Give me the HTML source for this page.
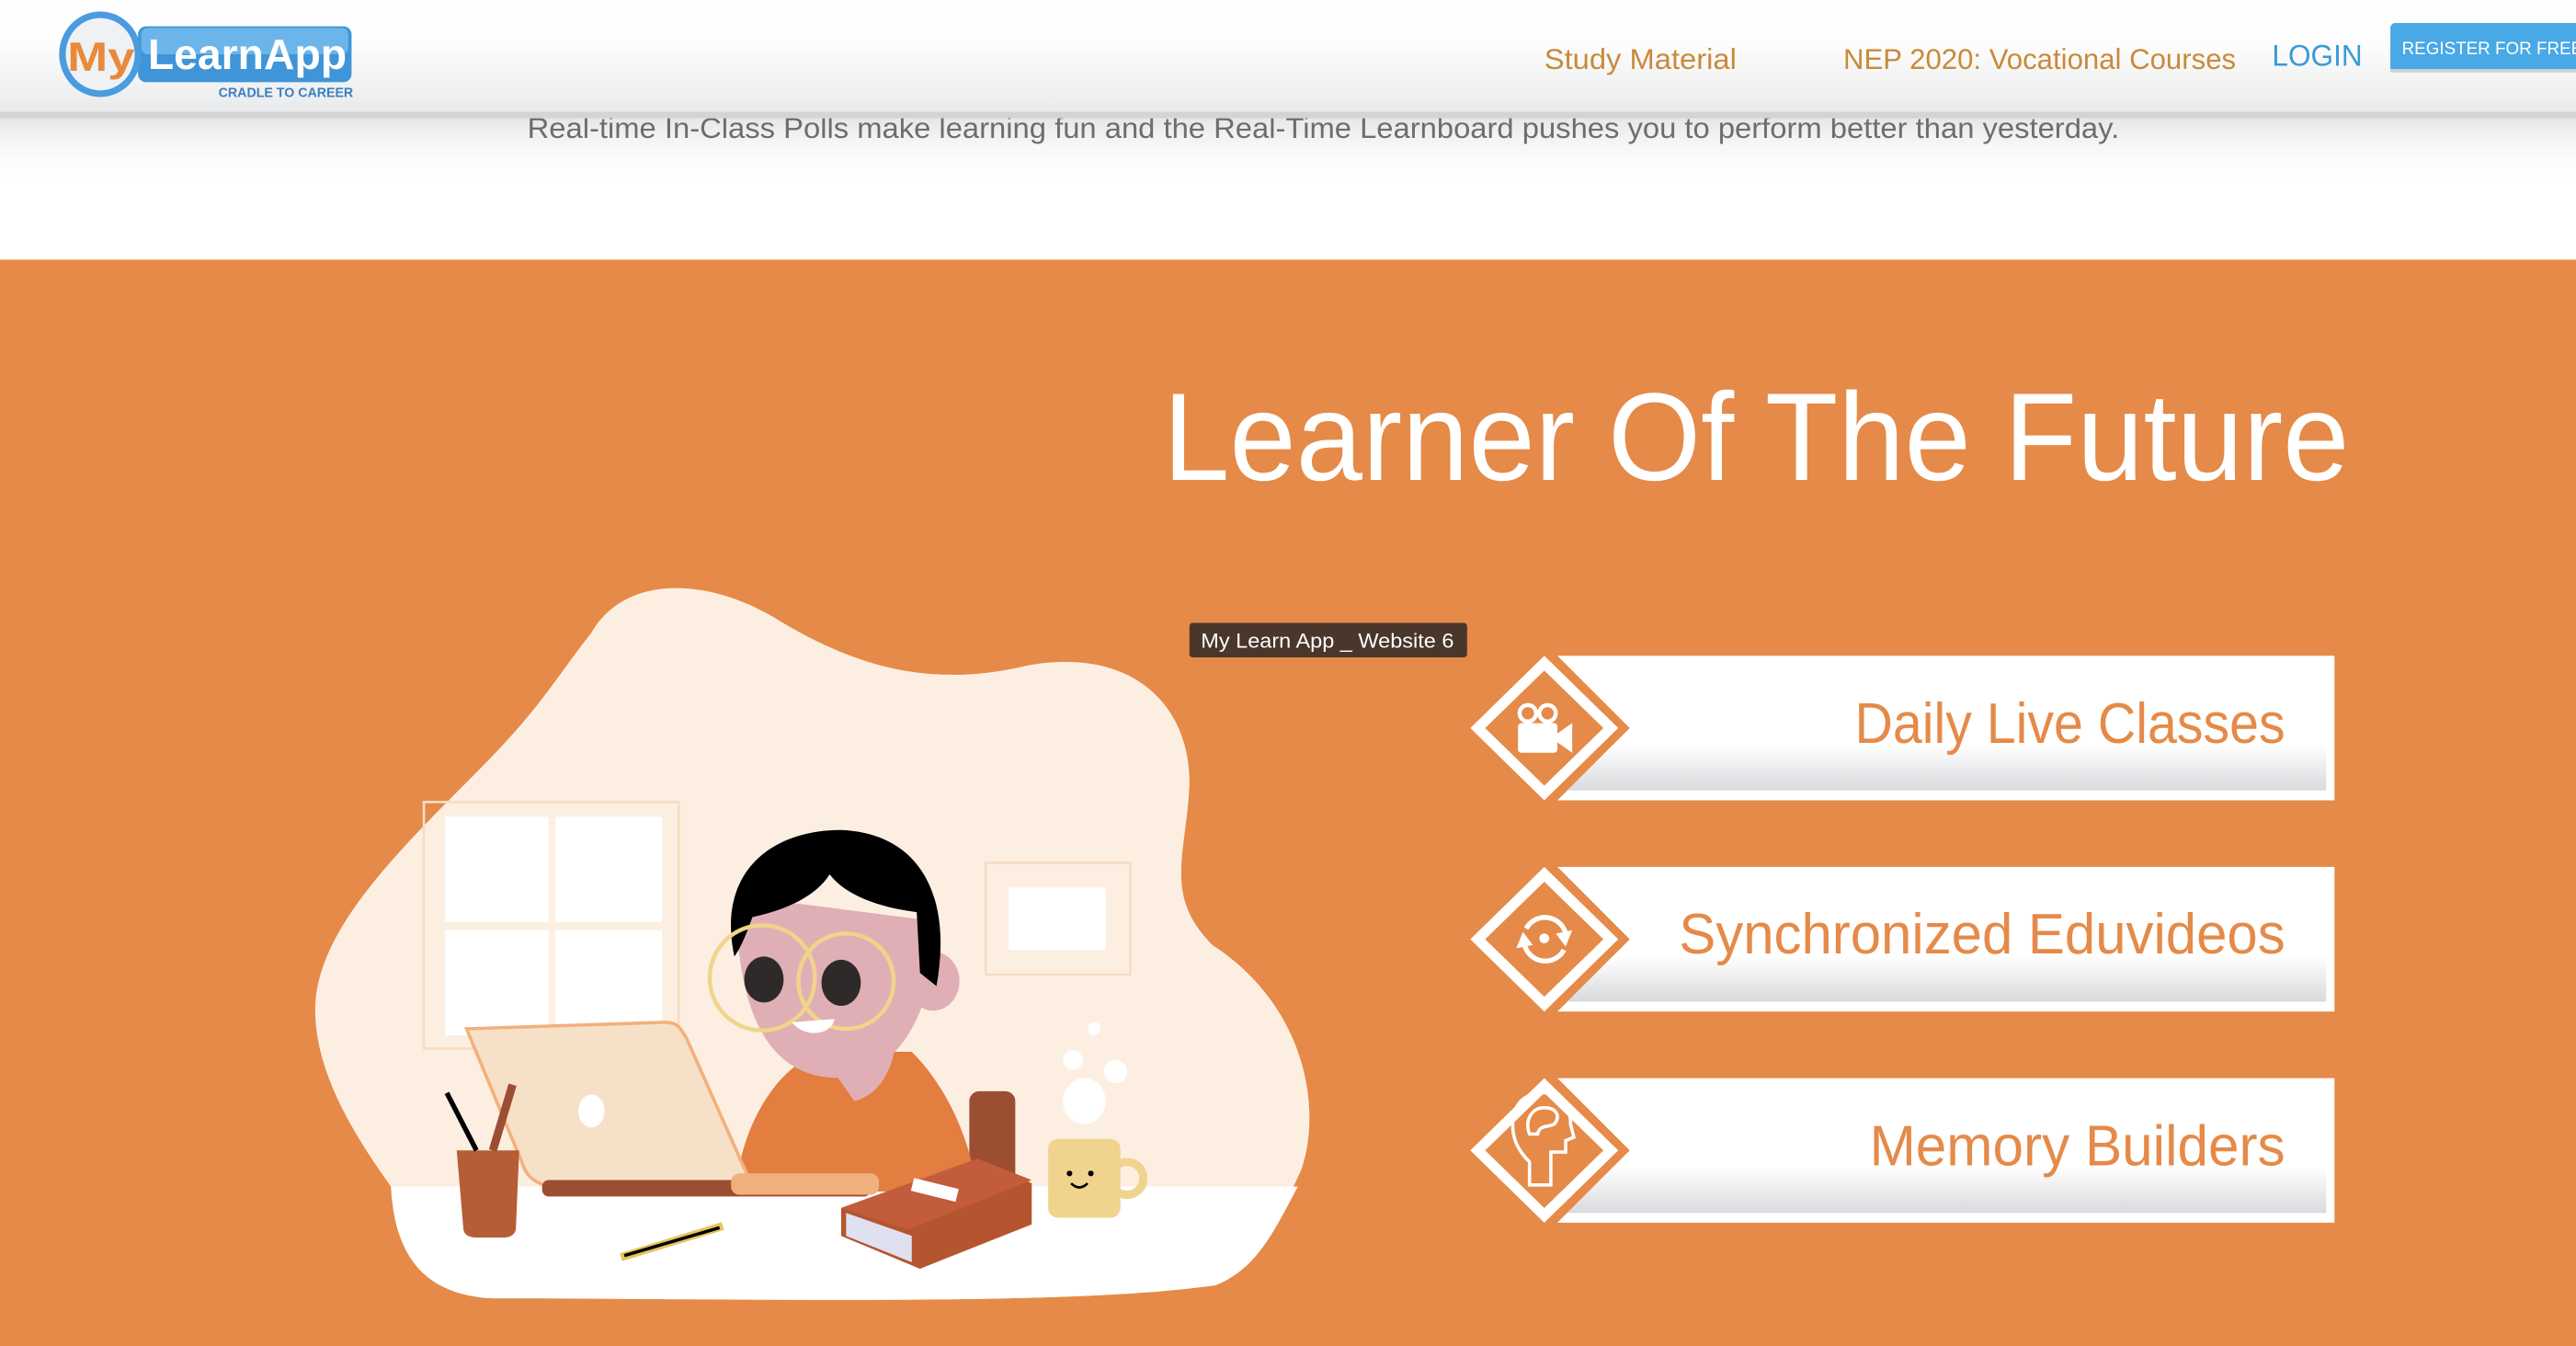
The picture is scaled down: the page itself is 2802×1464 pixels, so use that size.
<!DOCTYPE html>
<html><head><meta charset="utf-8"><style>
html,body{margin:0;padding:0;width:2802px;height:1464px;overflow:hidden;background:#fff}
svg{display:block}
text{font-family:"Liberation Sans",sans-serif}
</style></head><body>
<svg width="2802" height="1464" viewBox="0 0 1568 819" preserveAspectRatio="none" xmlns="http://www.w3.org/2000/svg">
<defs>
<linearGradient id="hdr" x1="0" y1="0" x2="0" y2="1"><stop offset="0" stop-color="#ffffff"/><stop offset="0.4" stop-color="#fdfdfd"/><stop offset="1" stop-color="#e9eaeb"/></linearGradient>
<linearGradient id="sh" x1="0" y1="0" x2="0" y2="1"><stop offset="0" stop-color="#e6e6e6"/><stop offset="1" stop-color="#ffffff" stop-opacity="0"/></linearGradient>
<linearGradient id="cg" x1="0" y1="0" x2="0" y2="1"><stop offset="0" stop-color="#ffffff"/><stop offset="1" stop-color="#d9dadd"/></linearGradient>
</defs>
<rect x="0" y="0" width="1568" height="819" fill="#fff"/>
<rect x="0" y="72" width="1568" height="40" fill="url(#sh)"/>
<text x="321" y="84" font-size="17.5" fill="#6d6d6d" textLength="969" lengthAdjust="spacingAndGlyphs">Real-time In-Class Polls make learning fun and the Real-Time Learnboard pushes you to perform better than yesterday.</text>
<rect x="0" y="0" width="1568" height="68" fill="url(#hdr)"/>
<rect x="0" y="68" width="1568" height="4" fill="#d3d4d6"/>
<rect x="84" y="16" width="130" height="34" rx="5" fill="#3f95d8"/>
<rect x="86" y="17" width="126" height="16" rx="4" fill="#6bb5eb"/>
<ellipse cx="61" cy="33" rx="25" ry="26" fill="#4a9be0"/>
<ellipse cx="61" cy="33" rx="21" ry="22" fill="#eef2f5"/>
<text x="41" y="43" font-size="25" font-weight="bold" fill="#e88a3a" textLength="41" lengthAdjust="spacingAndGlyphs">My</text>
<text x="90" y="42" font-size="26" font-weight="bold" fill="#fff" textLength="121" lengthAdjust="spacingAndGlyphs">LearnApp</text>
<text x="133" y="59" font-size="8.5" font-weight="bold" fill="#3a7fc4" textLength="82" lengthAdjust="spacingAndGlyphs">CRADLE TO CAREER</text>
<text x="940" y="42" font-size="17.5" fill="#c98a3a" textLength="117" lengthAdjust="spacingAndGlyphs">Study Material</text>
<text x="1122" y="42" font-size="17.5" fill="#c98a3a" textLength="239" lengthAdjust="spacingAndGlyphs">NEP 2020: Vocational Courses</text>
<text x="1383" y="40" font-size="18" fill="#3a9ad9" textLength="55" lengthAdjust="spacingAndGlyphs">LOGIN</text>
<rect x="1455" y="14" width="120" height="30" rx="3" fill="#49a8e6"/>
<rect x="1455" y="42" width="120" height="2" fill="#d0d0d0"/>
<text x="1462" y="33" font-size="11" fill="#fff" textLength="110" lengthAdjust="spacingAndGlyphs">REGISTER FOR FREE</text>
<rect x="0" y="158" width="1568" height="661" fill="#e58a48"/>
<text x="708" y="292" font-size="76" fill="#fff" textLength="722" lengthAdjust="spacingAndGlyphs" font-weight="300">Learner Of The Future</text>
<path d="M360,385 C380,350 430,350 475,378 C525,408 570,418 625,405 C690,393 725,430 724,478 C722,520 708,545 738,575 C795,612 805,675 792,712 C775,748 765,772 740,782 C650,795 450,790 300,790 C255,788 240,760 238,722 C215,690 190,650 192,610 C195,565 240,520 290,470 C330,430 340,410 360,385 Z" fill="#fcefe2"/>
<path d="M238,722 L790,722 C775,750 765,772 740,782 C650,795 450,790 300,790 C255,788 240,760 238,722 Z" fill="#fff"/>
<rect x="258" y="488" width="155" height="150" fill="none" stroke="#f8dcc4" stroke-width="1.5"/>
<rect x="271" y="497" width="63" height="64" fill="#fff"/><rect x="338" y="497" width="65" height="64" fill="#fff"/>
<rect x="271" y="566" width="63" height="64" fill="#fff"/><rect x="338" y="566" width="65" height="64" fill="#fff"/>
<rect x="600" y="525" width="88" height="68" fill="none" stroke="#f8dcc4" stroke-width="1.5"/>
<rect x="614" y="540" width="59" height="38" fill="#fff"/>
<rect x="590" y="664" width="28" height="60" rx="6" fill="#9c4e33"/>
<path d="M448,725 C450,690 470,650 500,640 L555,640 C575,660 590,690 595,725 Z" fill="#e47d40"/>
<ellipse cx="568" cy="597" rx="16" ry="18" fill="#e0afb5"/>
<path d="M448,545 C448,620 470,650 500,655 C530,660 555,640 565,600 L565,560 Z" fill="#e0afb5"/>
<path d="M447,582 C436,530 470,505 512,505 C560,507 580,545 570,600 L560,592 L558,555 C535,552 515,545 505,532 C495,548 472,555 458,558 C455,566 452,575 447,582 Z" fill="#000"/>
<circle cx="464" cy="595" r="32" fill="none" stroke="#f0d48a" stroke-width="2.5"/>
<circle cx="515" cy="597" r="29" fill="none" stroke="#f0d48a" stroke-width="2.5"/>
<ellipse cx="465" cy="596" rx="12" ry="14" fill="#2e2a2a"/>
<ellipse cx="512" cy="598" rx="12" ry="14" fill="#2e2a2a"/>
<path d="M482,622 C490,632 506,630 508,620 Z" fill="#fff"/>
<path d="M506,650 C520,640 540,615 545,618 C548,640 540,665 520,670 Z" fill="#e0afb5"/>
<path d="M284,626 L405,622 C412,622 414,625 418,632 L458,722 L335,722 C325,720 320,715 318,708 Z" fill="#f7e0c8" stroke="#f3b07a" stroke-width="2"/>
<ellipse cx="360" cy="676" rx="8" ry="10" fill="#fff"/>
<rect x="330" y="718" width="200" height="10" rx="4" fill="#9c4e33"/>
<rect x="445" y="714" width="90" height="13" rx="5" fill="#f0b07e"/>
<path d="M278,700 L316,700 L314,748 C313,752 310,753 306,753 L290,753 C285,753 282,751 282,747 Z" fill="#b55e35"/>
<path d="M272,665 L290,700" stroke="#000" stroke-width="3"/>
<path d="M300,700 L312,660" stroke="#9c4e33" stroke-width="5"/>
<path d="M378,765 L440,746" stroke="#e6c460" stroke-width="5"/>
<path d="M380,764 L438,747" stroke="#000" stroke-width="2"/>
<path d="M512,735 L595,705 L628,720 L628,745 L560,772 L512,752 Z" fill="#b5552f"/>
<path d="M515,738 L555,752 L555,768 L515,752 Z" fill="#dfe0f0"/>
<path d="M512,735 L595,705 L628,718 L553,748 Z" fill="#c35c3a"/>
<rect x="555" y="720" width="28" height="8" fill="#fff" transform="rotate(14 569 724)"/>
<rect x="638" y="693" width="44" height="48" rx="6" fill="#f0d48e"/>
<circle cx="686" cy="717" r="10" fill="none" stroke="#f0d48e" stroke-width="5"/>
<circle cx="651" cy="714" r="1.7" fill="#000"/><circle cx="664" cy="714" r="1.7" fill="#000"/>
<path d="M652,720 Q657,725 662,720" stroke="#000" stroke-width="1.5" fill="none"/>
<ellipse cx="660" cy="670" rx="13" ry="14" fill="#fff"/>
<circle cx="653" cy="645" r="6" fill="#fff"/><circle cx="679" cy="652" r="7" fill="#fff"/><circle cx="666" cy="626" r="4" fill="#fff"/>
<rect x="724" y="379" width="169" height="21" rx="2" fill="#4a362a"/>
<text x="731" y="394" font-size="12.5" fill="#fff" textLength="154" lengthAdjust="spacingAndGlyphs">My Learn App _ Website 6</text>
<g id="c1">
<path d="M948,399 L1421,399 L1421,487 L948,487 L992,443 Z" fill="#fff"/>
<path d="M982,453 L1416,453 L1416,481 L954,481 Z" fill="url(#cg)"/>
<path d="M940,399 L985,443 L940,487 L895,443 Z" fill="#fff"/>
<path d="M940,408 L976,443 L940,478 L904,443 Z" fill="#e58a48"/>
</g>
<use href="#c1" y="128.5"/>
<use href="#c1" y="257"/>
<text x="1391" y="452" font-size="35" fill="#e58a48" text-anchor="end" textLength="262" lengthAdjust="spacingAndGlyphs">Daily Live Classes</text>
<text x="1391" y="580" font-size="35" fill="#e58a48" text-anchor="end" textLength="369" lengthAdjust="spacingAndGlyphs">Synchronized Eduvideos</text>
<text x="1391" y="709" font-size="35" fill="#e58a48" text-anchor="end" textLength="253" lengthAdjust="spacingAndGlyphs">Memory Builders</text>
<g fill="#fff">
<circle cx="930" cy="434" r="5" fill="none" stroke="#fff" stroke-width="2.5"/>
<circle cx="942" cy="434" r="5" fill="none" stroke="#fff" stroke-width="2.5"/>
<rect x="924" y="440" width="24" height="18" rx="2"/>
<path d="M947,447 L957,440 L957,458 L947,451 Z"/>
</g>
<g fill="none" stroke="#fff" stroke-width="3">
<path d="M929,565 A13,13 0 0 1 953,568"/>
<path d="M952,578 A13,13 0 0 1 928,575"/>
</g>
<path d="M947,568 L957,566 L953,576 Z M933,575 L923,577 L927,567 Z" fill="#fff"/>
<circle cx="940" cy="571" r="3" fill="#fff"/>
<g fill="none" stroke="#fff" stroke-width="2">
<path d="M931,721 L931,707 C922,698 920,690 921,680 C923,668 933,664 941,665 C951,666 956,674 956,684 L958,692 L953,694 L953,701 L944,701 L944,721 Z"/>
<path d="M931,690 C928,682 932,674 940,674 C948,674 950,680 946,684 C943,686 937,684 936,690 Z"/>
</g>
</svg>
</body></html>
